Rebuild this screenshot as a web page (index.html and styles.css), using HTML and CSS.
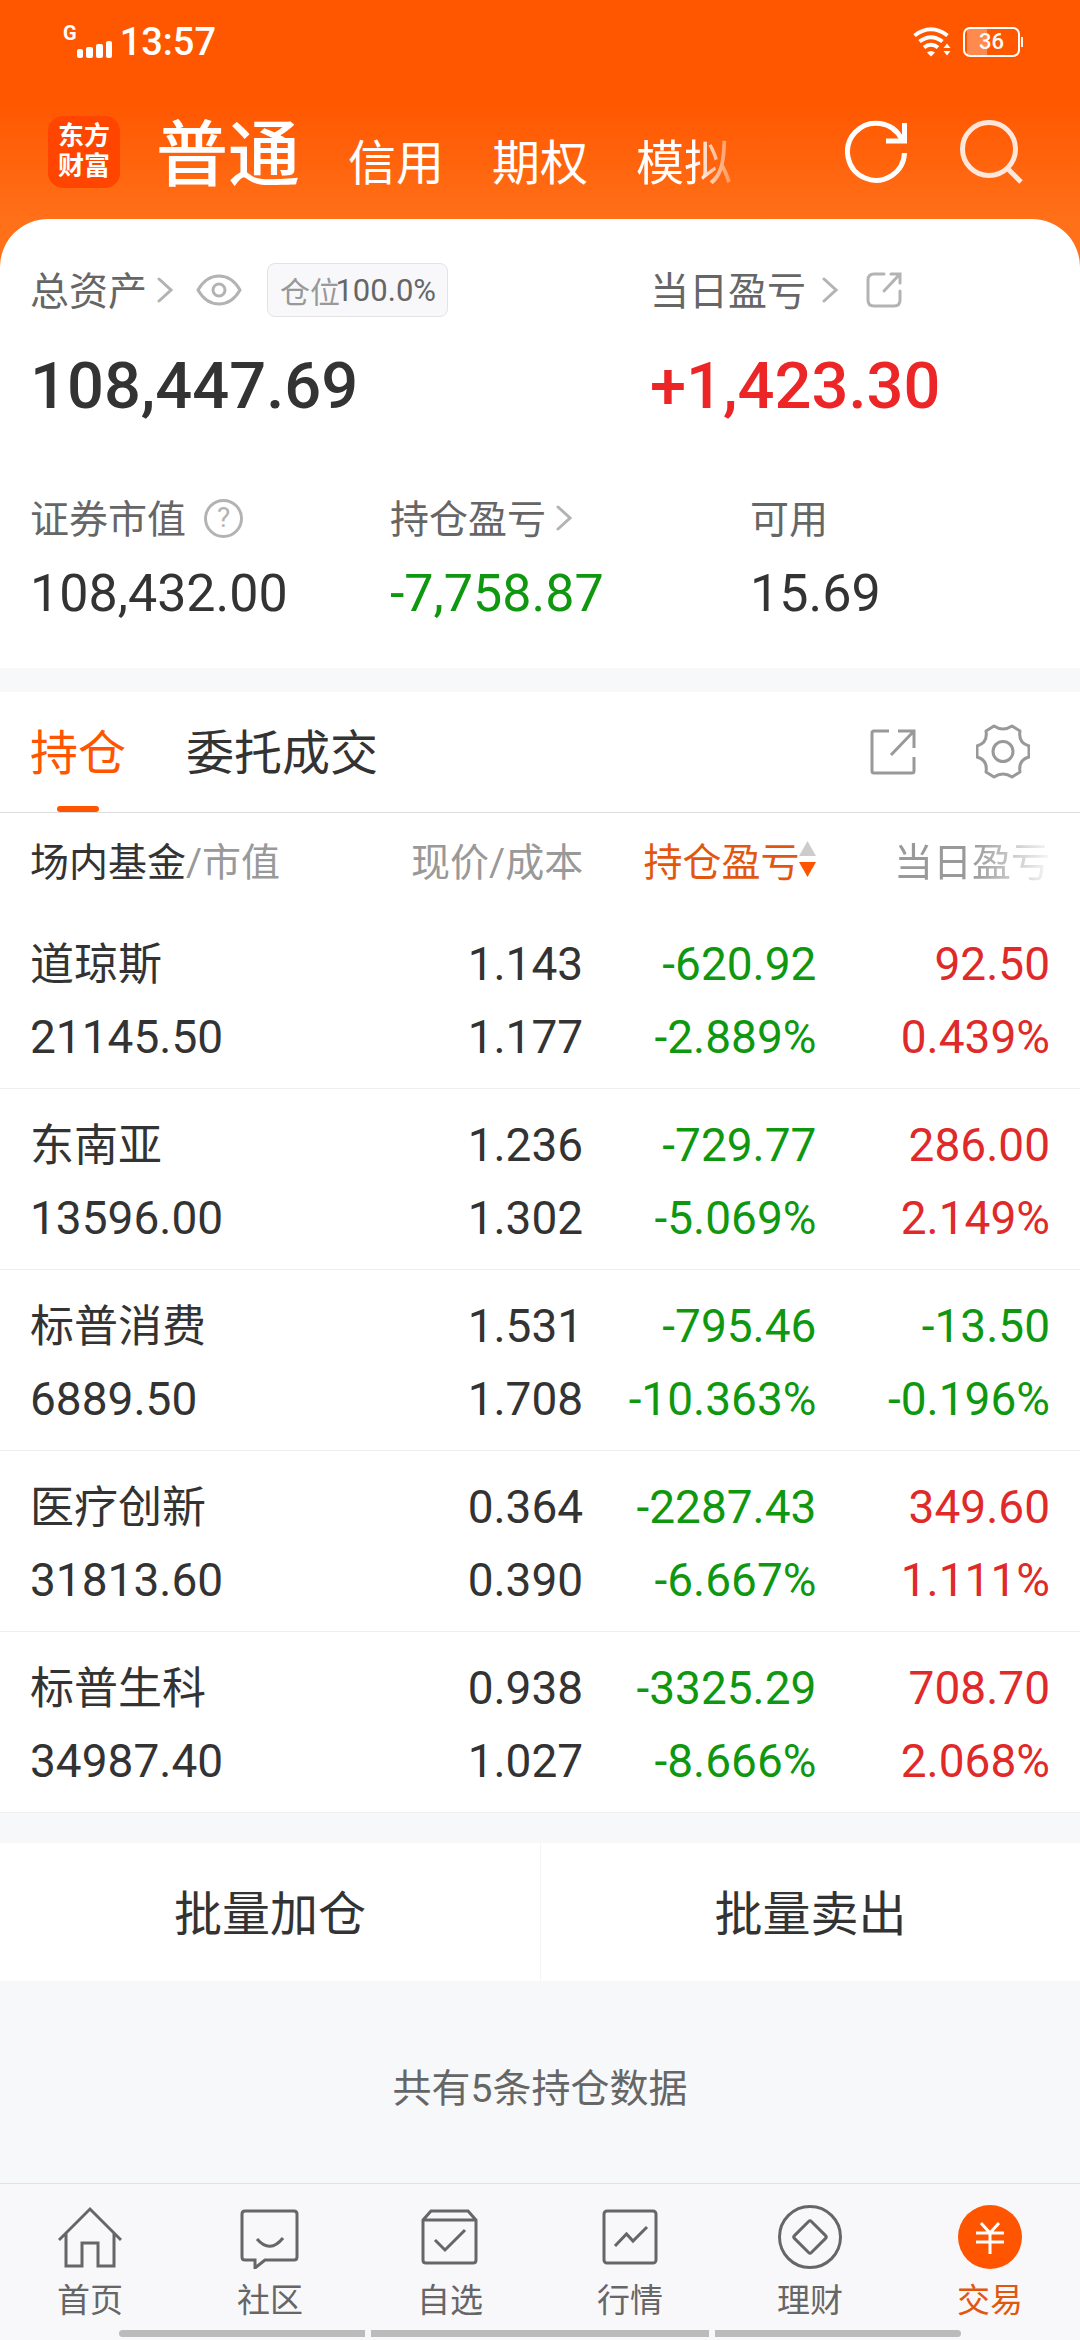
FILE: index.html
```html
<!DOCTYPE html>
<html lang="zh-CN">
<head>
    <meta charset="UTF-8">
    <meta name="viewport" content="width=device-width, initial-scale=1">
    <title>东方财富 - 交易</title>
    <link rel="stylesheet" href="styles.css">
</head>
<body>
    <div class="app">
        <!-- Status bar -->
        <div class="status-bar">
            <div class="status-left">
                <span class="network">G</span>
                <svg class="signal" width="36" height="17" viewBox="0 0 36 17" fill="#fff">
                    <rect x="0" y="8" width="6" height="9" rx="2"/>
                    <rect x="9" y="6" width="7" height="11" rx="2"/>
                    <rect x="19" y="3" width="7" height="14" rx="2"/>
                    <rect x="29" y="0" width="6" height="17" rx="2"/>
                </svg>
                <span class="clock">13:57</span>
            </div>
            <div class="status-right">
                <svg width="38" height="30" viewBox="0 0 38 30" fill="none" stroke="#fff" stroke-width="4">
                    <path d="M1.500 8.500Q18 -4 34.500 8.500"/>
                    <path d="M6.500 14.500Q18 6 29.500 14.500"/>
                    <path d="M11 20.500Q18 15 25 20.500"/>
                    <path d="M14 25.500Q18 22.500 22 25.500L18 29.500z" fill="#fff" stroke="none"/>
                    <path d="M30.500 21L34 16.500L37.500 21zM30.500 24H37.500L34 28.500z" fill="#fff" stroke="none"/>
                </svg>
                <span class="battery"><span class="battery-text">36</span></span>
            </div>
        </div>

        <!-- Account types -->
        <header class="top-bar">
            <a class="logo" href="#">东方<br>财富</a>
            <nav class="accounts">
                <a class="active" href="#">普通</a>
                <a href="#">信用</a>
                <a href="#">期权</a>
                <a class="fade" href="#">模拟</a>
            </nav>
            <button class="icon-btn" aria-label="刷新">
                <svg width="64" height="64" viewBox="0 0 64 64" fill="none" stroke="#fff" stroke-width="5">
                    <path d="M59.500 33A28.500 28.500 0 1 1 56.500 19"/>
                    <path d="M59.500 3V21H41"/>
                </svg>
            </button>
            <button class="icon-btn search" aria-label="搜索">
                <svg width="64" height="64" viewBox="0 0 64 64" fill="none" stroke="#fff" stroke-width="5">
                    <circle cx="30" cy="29" r="26.500"/>
                    <path d="M49 49L62 62"/>
                </svg>
            </button>
        </header>

        <!-- Assets -->
        <section class="assets">
            <div class="totals">
                <div class="total">
                    <div class="label">
                        <a class="text" href="#">总资产</a>
                        <svg class="chevron near" width="16" height="26" viewBox="0 0 16 26"><path d="M2 2L14 13L2 24"/></svg>
                        <button class="eye" aria-label="隐藏资产">
                            <svg width="46" height="34" viewBox="0 0 46 34" fill="none" stroke="#b3b3b3" stroke-width="3">
                                <path d="M2 17Q10 3 23 3T44 17Q36 31 23 31T2 17z"/>
                                <circle cx="23" cy="17" r="6"/>
                            </svg>
                        </button>
                        <span class="ratio"><span>仓位</span><b>100.0%</b></span>
                    </div>
                    <div class="amount">108,447.69</div>
                </div>
                <div class="total">
                    <div class="label">
                        <a class="text" href="#">当日盈亏</a>
                        <svg class="chevron wide" width="16" height="26" viewBox="0 0 16 26"><path d="M2 2L14 13L2 24"/></svg>
                        <button class="share" aria-label="分享">
                            <svg width="36" height="36" viewBox="0 0 36 36" fill="none" stroke="#b3b3b3" stroke-width="3" stroke-linecap="round">
                                <path d="M18 2H8Q2 2 2 8V28Q2 34 8 34H28Q34 34 34 28V19"/>
                                <path d="M25 2H34V11M33 3L18 19"/>
                            </svg>
                        </button>
                    </div>
                    <div class="amount rise">+1,423.30</div>
                </div>
            </div>
            <div class="details">
                <div class="detail">
                    <div class="label">
                        <span class="text">证券市值</span>
                        <button class="help" aria-label="说明">?</button>
                    </div>
                    <div class="value">108,432.00</div>
                </div>
                <div class="detail">
                    <div class="label">
                        <a class="text" href="#">持仓盈亏</a>
                        <svg class="chevron near" width="16" height="26" viewBox="0 0 16 26"><path d="M2 2L14 13L2 24"/></svg>
                    </div>
                    <div class="value fall">-7,758.87</div>
                </div>
                <div class="detail">
                    <div class="label"><span class="text">可用</span></div>
                    <div class="value">15.69</div>
                </div>
            </div>
        </section>

        <!-- Holdings -->
        <section class="holdings">
            <div class="tabs">
                <button class="tab active">持仓</button>
                <button class="tab">委托成交</button>
                <button class="tool" aria-label="分享持仓">
                    <svg width="46" height="48" viewBox="0 0 46 48" fill="none" stroke="#999" stroke-width="3">
                        <path d="M19 3H4Q2 3 2 5V43Q2 45 4 45H42Q44 45 44 43V29"/>
                        <path d="M28 3H44V20M44 3L21 27"/>
                    </svg>
                </button>
                <button class="tool" aria-label="设置">
                    <svg width="54" height="56" viewBox="1 0 54 56" fill="none" stroke="#999" stroke-width="3" stroke-linejoin="round">
                        <path d="M19 2Q28 8 37 2L45 7Q43 19 54 22V33Q43 36 45 48L37 53Q28 47 19 53L11 48Q13 36 2 33V22Q13 19 11 7z"/>
                        <circle cx="28" cy="27.500" r="10"/>
                    </svg>
                </button>
            </div>
            <table>
                <colgroup>
                    <col class="col-name">
                    <col class="col-price">
                    <col class="col-profit">
                    <col>
                </colgroup>
                <thead>
                    <tr>
                        <th><b>场内基金</b>/市值</th>
                        <th>现价/成本</th>
                        <th class="sorted"><button class="sort">持仓盈亏<svg width="17" height="36" viewBox="0 0 17 36"><path d="M0 15L8.500 0L17 15z" fill="#ccc"/><path d="M0 21H17L8.500 36z" fill="#ff5500"/></svg></button></th>
                        <th><span class="fade-out">当日盈亏</span></th>
                    </tr>
                </thead>
                <tbody>
                    <tr>
                        <td><span class="name">道琼斯</span><br>21145.50</td>
                        <td>1.143<br>1.177</td>
                        <td class="fall">-620.92<br>-2.889%</td>
                        <td class="rise">92.50<br>0.439%</td>
                    </tr>
                    <tr>
                        <td><span class="name">东南亚</span><br>13596.00</td>
                        <td>1.236<br>1.302</td>
                        <td class="fall">-729.77<br>-5.069%</td>
                        <td class="rise">286.00<br>2.149%</td>
                    </tr>
                    <tr>
                        <td><span class="name">标普消费</span><br>6889.50</td>
                        <td>1.531<br>1.708</td>
                        <td class="fall">-795.46<br>-10.363%</td>
                        <td class="fall">-13.50<br>-0.196%</td>
                    </tr>
                    <tr>
                        <td><span class="name">医疗创新</span><br>31813.60</td>
                        <td>0.364<br>0.390</td>
                        <td class="fall">-2287.43<br>-6.667%</td>
                        <td class="rise">349.60<br>1.111%</td>
                    </tr>
                    <tr>
                        <td><span class="name">标普生科</span><br>34987.40</td>
                        <td>0.938<br>1.027</td>
                        <td class="fall">-3325.29<br>-8.666%</td>
                        <td class="rise">708.70<br>2.068%</td>
                    </tr>
                </tbody>
            </table>
        </section>

        <div class="batch">
            <button>批量加仓</button>
            <button>批量卖出</button>
        </div>
        <p class="count">共有5条持仓数据</p>

        <!-- Bottom navigation -->
        <footer class="bottom">
            <nav class="bottom-nav">
                <a href="#">
                    <svg viewBox="0 0 64 64"><path d="M1 35L32 4L63 35M8 28V61H24V38H40V61H56V28"/></svg>
                    首页
                </a>
                <a href="#">
                    <svg viewBox="0 0 64 64"><path d="M7 6H56Q59 6 59 9V52Q59 55 56 55H27L17 63V55H7Q4 55 4 52V9Q4 6 7 6zM19 34Q32 49 45 33"/></svg>
                    社区
                </a>
                <a href="#">
                    <svg viewBox="0 0 64 64"><path d="M5 15L13 6H50L58 15V55Q58 58 55 58H8Q5 58 5 55zM5 15H58M17 35L27 45L47 25"/></svg>
                    自选
                </a>
                <a href="#">
                    <svg viewBox="0 0 64 64"><rect x="6" y="6" width="52" height="52" rx="3"/><path d="M17 41L28.500 29L35 36L49 22"/></svg>
                    行情
                </a>
                <a href="#">
                    <svg viewBox="0 0 64 64"><circle cx="32" cy="32" r="30.500"/><rect x="20" y="20" width="24" height="24" rx="2" transform="rotate(45 32 32)"/></svg>
                    理财
                </a>
                <a class="active" href="#">
                    <svg viewBox="0 0 64 64"><circle class="dot" cx="32" cy="32" r="32"/><path class="yen" d="M23 18L32 28L41 18M18 28H46M18 37H46M32 28V49"/></svg>
                    交易
                </a>
            </nav>
            <div class="home-bar"><i></i><i></i><i></i></div>
        </footer>
    </div>
</body>
</html>
```
FILE: styles.css
```css
/* Base */
* {
    box-sizing: border-box;
}

body {
    margin: 0;
    font-family: Roboto, "Noto Sans CJK SC", sans-serif;
    color: #333;
    background: #f7f8fa;
}

a {
    color: inherit;
    text-decoration: none;
}

button {
    padding: 0;
    border: none;
    background: none;
    font: inherit;
    color: inherit;
    cursor: pointer;
}

svg {
    display: block;
}

b {
    font-weight: 400;
}

.app {
    min-height: 100vh;
    display: flex;
    flex-direction: column;
    background: linear-gradient(#ff5700 100px, #ff7019 220px, #ff7019 300px, #f7f8fa 300px);
}

.rise {
    color: #e02a2a;
}

.fall {
    color: #0f980f;
}

/* Status bar */
.status-bar {
    height: 84px;
    padding: 0 60px 0 63px;
    display: flex;
    justify-content: space-between;
    align-items: center;
    color: #fff;
}

.status-left,
.status-right {
    display: flex;
    align-items: center;
}

.network {
    font-size: 20px;
    font-weight: 700;
    line-height: 20px;
    padding-bottom: 18px;
}

.signal {
    margin: 14px 7px 0 0;
}

.clock {
    font-size: 38px;
    font-weight: 500;
}

.battery {
    position: relative;
    margin-left: 12px;
    width: 57px;
    height: 30px;
    border: 2px solid #fff;
    border-radius: 7px;
    text-align: center;
    background: linear-gradient(90deg, #ff8a50 20px, transparent 20px) 2px 0 no-repeat;
}

.battery::after {
    content: "";
    position: absolute;
    right: -5px;
    top: 8px;
    width: 2px;
    height: 10px;
    background: #fff;
}

.battery-text {
    display: block;
    font-size: 22px;
    font-weight: 500;
    line-height: 26px;
}

/* Account types */
.top-bar {
    height: 135px;
    padding: 0 57px 0 48px;
    display: flex;
    align-items: center;
    color: #fff;
}

.logo {
    width: 72px;
    height: 72px;
    border-radius: 15px;
    background: #ff4500;
    padding: 5px 0;
    margin-right: 36px;
    font-size: 26px;
    font-weight: 700;
    line-height: 30px;
    text-align: center;
}

.accounts {
    flex: 1;
    display: flex;
    align-items: baseline;
    gap: 48px;
    padding-top: 16px;
    font-size: 48px;
    line-height: 100px;
}

.accounts .active {
    font-size: 72px;
    font-weight: 500;
}

.fade {
    -webkit-mask-image: linear-gradient(90deg, #000 60%, rgba(0, 0, 0, 0.3));
    mask-image: linear-gradient(90deg, #000 60%, rgba(0, 0, 0, 0.3));
}

.search {
    margin-left: 50px;
    opacity: 0.85;
}

/* Assets */
.assets {
    background: #fff;
    border-radius: 48px 48px 0 0;
    padding: 41px 0 44px;
}

.totals {
    display: grid;
    grid-template-columns: 62fr 43fr;
    padding-left: 30px;
}

.details {
    display: grid;
    grid-template-columns: repeat(3, 1fr);
    margin-top: 64px;
}

.detail {
    padding-left: 30px;
}

.label {
    display: flex;
    align-items: center;
    height: 60px;
    font-size: 39px;
    color: #666;
}

.label .text {
    padding-bottom: 4px;
}

.chevron {
    fill: none;
    stroke: #b3b3b3;
    stroke-width: 3;
    stroke-linecap: round;
}

.near {
    margin-left: 10px;
}

.wide {
    margin-left: 16px;
}

.eye {
    margin-left: 23px;
}

.share {
    margin-left: 28px;
}

.ratio {
    display: flex;
    align-items: center;
    justify-content: space-between;
    width: 181px;
    height: 54px;
    margin-left: 25px;
    padding: 0 11px 0 12px;
    border: 1px solid #e3e3e6;
    border-radius: 8px;
    background: #f8f8fb;
    font-size: 30px;
    color: #999;
}

.ratio b {
    font-size: 31px;
    margin-left: -8px;
    color: #666;
}

.amount {
    font-size: 65px;
    font-weight: 500;
    line-height: 76px;
    padding-top: 28px;
}

.amount.rise {
    color: #ec2626;
}

.help {
    width: 39px;
    height: 39px;
    margin-left: 18px;
    border: 3px solid #b3b3b3;
    border-radius: 50%;
    font-size: 28px;
    line-height: 32px;
    color: #b3b3b3;
}

.value {
    font-size: 52px;
    line-height: 60px;
    padding-top: 16px;
}

/* Holdings */
.holdings {
    margin-top: 24px;
    background: #fff;
}

.tabs {
    display: flex;
    align-items: center;
    gap: 60px;
    height: 121px;
    padding: 0 50px 0 30px;
    border-bottom: 1px solid #ddd;
}

.tab {
    position: relative;
    height: 120px;
    padding-bottom: 6px;
    font-size: 48px;
}

.tab.active {
    color: #ff5500;
}

.tab.active::after {
    content: "";
    position: absolute;
    left: 50%;
    bottom: 0;
    width: 42px;
    height: 6px;
    margin-left: -21px;
    border-radius: 3px;
    background: #ff5500;
}

.tab + .tool {
    margin-left: auto;
}

table {
    width: 100%;
    table-layout: fixed;
    border-collapse: collapse;
}

.col-name {
    width: 36%;
}

.col-price {
    width: 18%;
}

.col-profit {
    width: 21.6%;
}

th {
    height: 95px;
    padding: 0 0 3px;
    font-size: 39px;
    font-weight: 400;
    color: #999;
    text-align: right;
    white-space: nowrap;
}

td {
    padding: 20px 0 14px;
    border-bottom: 1px solid #eee;
    font-size: 46px;
    line-height: 73px;
    text-align: right;
    white-space: nowrap;
}

th:first-child,
td:first-child {
    padding-left: 30px;
    text-align: left;
}

th:last-child,
td:last-child {
    padding-right: 30px;
}

th b {
    color: #333;
}

.sort {
    display: inline-flex;
    align-items: center;
    color: #e2570f;
}

.fade-out {
    -webkit-mask-image: linear-gradient(90deg, #000 50%, rgba(0, 0, 0, 0.08));
    mask-image: linear-gradient(90deg, #000 50%, rgba(0, 0, 0, 0.08));
}

.name {
    font-size: 44px;
    line-height: 1;
}

/* Batch actions */
.batch {
    display: grid;
    grid-template-columns: 1fr 1fr;
    margin-top: 30px;
    background: #fff;
}

.batch button {
    height: 138px;
    padding-bottom: 4px;
    font-size: 48px;
}

.batch button + button {
    border-left: 1px solid #f5f5f7;
}

.count {
    margin: 78px 0 40px;
    font-size: 39px;
    line-height: 60px;
    text-align: center;
    color: #666;
}

/* Bottom navigation */
.bottom {
    margin-top: auto;
    border-top: 1px solid #e2e2e4;
    background: #f8f8fb;
}

.bottom-nav {
    display: grid;
    grid-template-columns: repeat(6, 1fr);
    padding-top: 21px;
}

.bottom-nav a {
    display: flex;
    flex-direction: column;
    align-items: center;
    gap: 12px;
    font-size: 33px;
    line-height: 40px;
    color: #666;
}

.bottom-nav svg {
    width: 64px;
    height: 64px;
    fill: none;
    stroke: #666;
    stroke-width: 3;
}

.bottom-nav .active {
    color: #e2570f;
}

.bottom-nav .dot {
    fill: #ff5500;
    stroke: none;
}

.bottom-nav .yen {
    stroke: #fff;
}

.home-bar {
    display: grid;
    grid-template-columns: 245fr 338fr 245fr;
    gap: 6px;
    width: 78%;
    margin: 9px auto 0;
    border-radius: 4px;
    overflow: hidden;
}

.home-bar i {
    height: 7px;
    background: #bbb;
}

.bottom {
    padding-bottom: 3px;
}
```
